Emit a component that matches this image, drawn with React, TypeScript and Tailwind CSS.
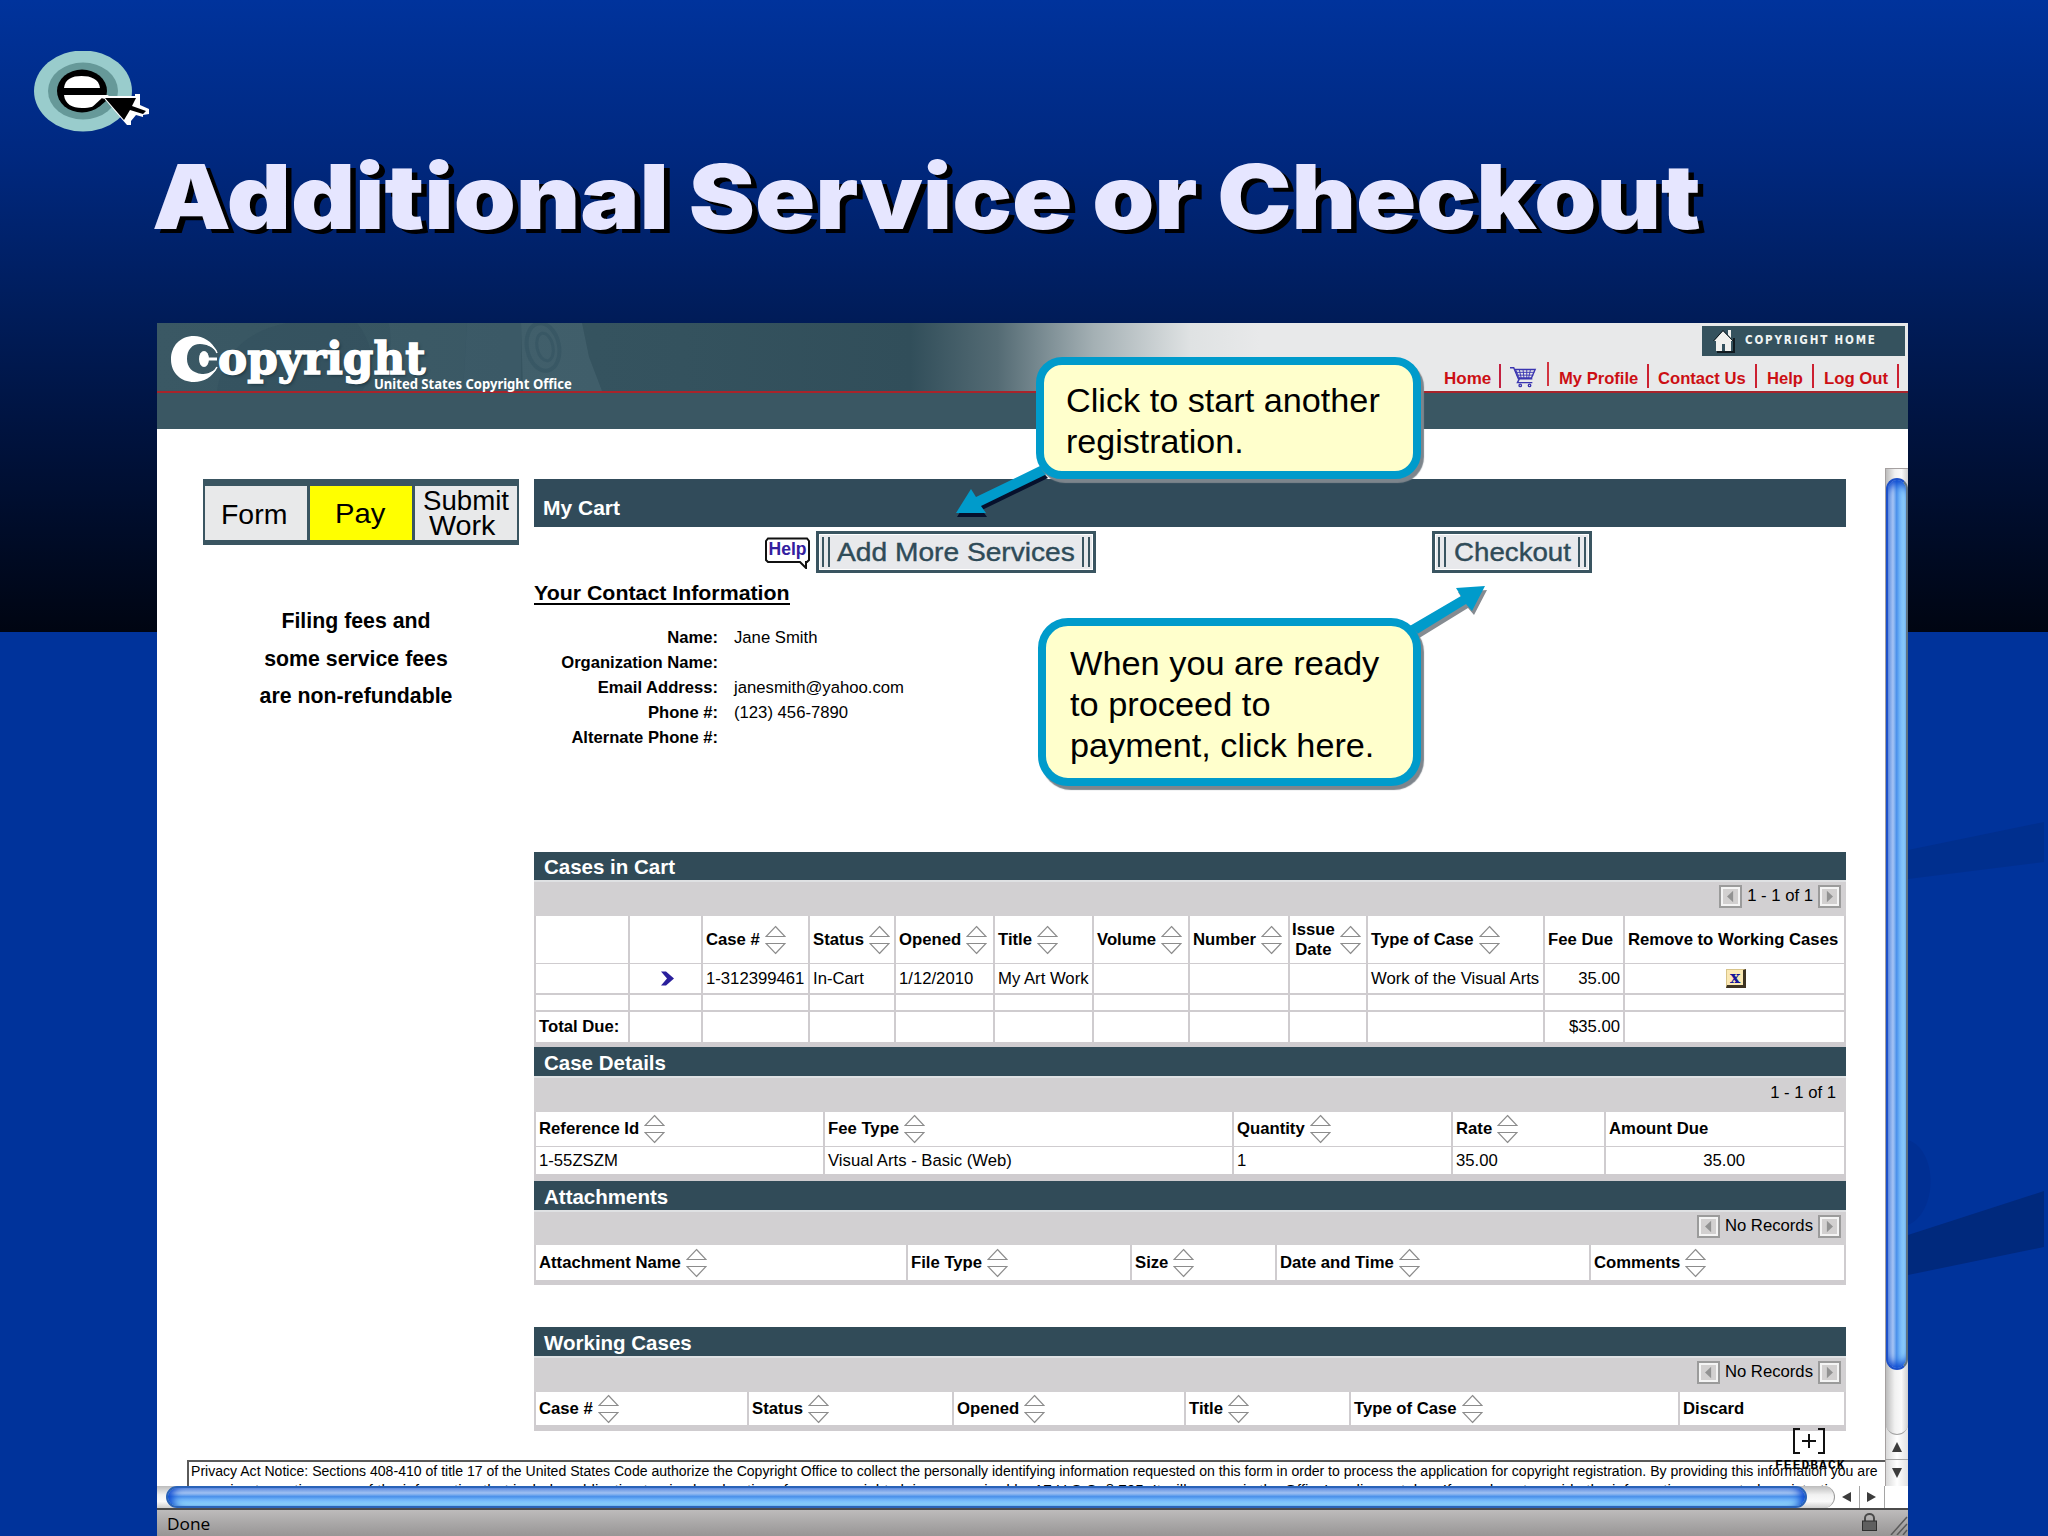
import React, { useLayoutEffect, useRef, useState } from 'react';

/* Text run stretched horizontally to an exact width. */
function Fit({ w, className = '', children }: { w: number; className?: string; children: React.ReactNode }) {
  const ref = useRef<HTMLSpanElement>(null);
  const [scale, setScale] = useState(1);
  useLayoutEffect(() => {
    const measure = () => {
      if (ref.current && ref.current.offsetWidth) setScale(w / ref.current.offsetWidth);
    };
    measure();
    document.fonts?.ready.then(measure);
  }, [w]);
  return (
    <span className={'block shrink-0 ' + className} style={{ width: w }}>
      <span ref={ref} className="inline-block origin-left whitespace-nowrap" style={{ transform: `scaleX(${scale})` }}>
        {children}
      </span>
    </span>
  );
}

function Sort() {
  return (
    <svg className="ml-[5px] h-[30px] w-[21px] shrink-0" viewBox="0 0 21 30" fill="#fff" stroke="#8c8c8c" strokeWidth="1.2">
      <path d="M10.5 1.5 L20 11.5 H1 Z" />
      <path d="M10.5 28.5 L20 18.5 H1 Z" />
    </svg>
  );
}

function PagerButton({ dir }: { dir: 'left' | 'right' }) {
  return (
    <span className="flex h-[23px] w-[23px] shrink-0 items-center justify-center border-2 border-[#9b9b9b] bg-[#d2d0d0] shadow-[inset_0_0_0_2px_#f4f4f4]">
      <svg className="h-[13px] w-[7px]" viewBox="0 0 8 13" fill="#929292">
        {dir === 'left' ? <path d="M7 0 V13 L0 6.5 Z" /> : <path d="M1 0 V13 L8 6.5 Z" />}
      </svg>
    </span>
  );
}

function SectionBar({ title, className }: { title: string; className: string }) {
  return (
    <div className={'flex items-center bg-[#314b58] pl-[10px] pt-[3px] text-[20.5px] font-bold leading-none text-white ' + className}>
      {title}
    </div>
  );
}

function Pager({ label, buttons = true, className }: { label: string; buttons?: boolean; className: string }) {
  return (
    <div className={'flex items-start justify-end border-t-2 border-[#dfe1e3] bg-[#d2d0d2] pt-[3px] text-[16.700px] leading-[22px] ' + className}>
      {buttons && <PagerButton dir="left" />}
      <span className={buttons ? 'mx-[5px]' : 'mr-[10px] mt-[1px]'}>{label}</span>
      {buttons && <PagerButton dir="right" />}
      {buttons && <span className="w-[5px]" />}
    </div>
  );
}

function Head({ label, sort = true }: { label: string; sort?: boolean }) {
  return (
    <div className="flex items-center whitespace-nowrap bg-white pl-[3px] font-bold">
      {label}
      {sort && <Sort />}
    </div>
  );
}

function Cell({ children, className = '' }: { children?: React.ReactNode; className?: string }) {
  return <div className={'flex items-center whitespace-nowrap bg-white pl-[3px] ' + className}>{children}</div>;
}

const casesGrid = 'grid grid-cols-[92px_71px_105px_84px_97px_97px_94px_98px_76px_175px_78px_219px] gap-x-[2px] bg-[#cfcccf] px-[2px]';
const detailsGrid = 'grid grid-cols-[287px_407px_217px_151px_238px] gap-x-[2px] bg-[#cfcccf] px-[2px]';
const attachGrid = 'grid grid-cols-[370px_222px_143px_312px_253px] gap-x-[2px] bg-[#cfcccf] px-[2px]';
const workingGrid = 'grid grid-cols-[211px_203px_230px_163px_327px_164px] gap-x-[2px] bg-[#cfcccf] px-[2px]';

function Logo() {
  return (
    <svg className="h-[86px] w-[120px]" viewBox="0 0 120 86">
      <ellipse cx="49" cy="40" rx="49" ry="40.5" fill="#99cccc" />
      <ellipse cx="49" cy="40" rx="35" ry="28.5" fill="#669999" />
      <ellipse cx="48" cy="40" rx="25" ry="21.5" fill="#000" />
      <path d="M30 37 C31 28 38 25 47.5 25 C57 25 65 28 66 37 Z" fill="#fff" />
      <path d="M30 44 H75 L66 50 C62 56 56 57 48 57 C38 57 31 53 30 44 Z" fill="#fff" />
      <path d="M68 45 L101 45 V43 H106 V54 L115 58 V63 L109 64 V66 L102 64 L97 70 V74 H93 L86 66 Z" fill="#fff" />
      <path d="M71 47 L102 47 L98 55 L112 60 L109 63 L96 59 L90 69 Z" fill="#000" />
      <path d="M55 59 L66 55 L72 50 L68 47 Z" fill="#000" />
    </svg>
  );
}

function SiteHeader() {
  return (
    <header className="flex h-[106px] flex-col bg-[#3a5763]">
      <div className="relative flex h-[70px] justify-between border-b-2 border-[#a8242b] bg-[linear-gradient(90deg,#3a5864_0%,#34525e_30%,#314e5a_43%,#546b74_48%,#a4b0b4_53.5%,#dfe2e3_59%,#e8e9ea_63%)]">
        <svg className="absolute left-0 top-0 h-[68px] w-[480px]" viewBox="0 0 480 68" fill="none">
          <path d="M60 68 C66 30 90 8 130 0 H200 C215 20 222 44 205 68 Z" fill="#2c4956" opacity=".25" />
          <path d="M232 0 H310 L306 68 H222 C232 40 236 20 232 0 Z" fill="#456470" opacity=".3" />
          <path d="M310 0 H364 V68 H306 Z" fill="#3f5e6a" opacity=".6" />
          <path d="M364 0 H425 L432 34 L445 68 H366 Z" fill="#4b6a76" opacity=".5" />
          <ellipse cx="386" cy="24" rx="16" ry="24" stroke="#345460" strokeWidth="4" opacity=".6" transform="rotate(-12 386 24)" />
          <ellipse cx="388" cy="24" rx="8" ry="14" stroke="#345460" strokeWidth="3" opacity=".6" transform="rotate(-12 388 24)" />
        </svg>
        <div className="relative pl-[14px] pt-[12px] text-white">
          <div className="flex h-[50px] items-start">
            <svg className="mt-[1px] h-[47px] w-[47px] shrink-0" viewBox="0 0 47 47">
              <path d="M46 16 C41 5 32 0 23 0 C9 0 0 10 0 23.500 C0 37 10 46 23 46 C33 46 41 41 46 32 C40 37 35 38 31 38 C21 37 16 31 16 23 C16 14 21 8 29 8 C36 8 42 11 46 16 Z" fill="#fff" />
              <path d="M46 17 C44 11 37 7 30 7 M46 31 C43 37 37 40 30 39" stroke="#fff" strokeWidth="1.500" fill="none" />
              <ellipse cx="33" cy="23" rx="5" ry="8" fill="#fff" />
              <path d="M30 23 H46" stroke="#fff" strokeWidth="3" />
            </svg>
            <Fit w={207} className="-mt-[5px] text-[45px] font-bold leading-[58px] [-webkit-text-stroke:1.5px_#fff] [font-family:'DejaVu_Serif',serif] [text-shadow:2px_2px_3px_#1f3a46]">
              opyright
            </Fit>
          </div>
          <div className="relative -top-[12px] left-[203px]">
            <Fit w={198} className="text-[14.500px] font-bold leading-[20px] [font-family:'Noto_Sans',sans-serif]">
              United States Copyright Office
            </Fit>
          </div>
        </div>
        <div className="flex flex-col items-end pr-[3px] pt-[3px]">
          <div className="flex h-[30px] w-[203px] items-center bg-[#35525e] pl-[11px]">
            <svg className="h-[24px] w-[22px]" viewBox="0 0 22 24">
              <path d="M4 23 H21 V9" stroke="#101a20" strokeWidth="2" fill="none" />
              <path d="M1 12 L10 2 L20 12 H18 V22 H12 V15 H9 V22 H3 V12 Z" fill="#f1f1ee" />
              <path d="M15 1 H18 V9 L15 6 Z" fill="#f1f1ee" />
              <path d="M0.500 12 L10 1.500 L20 12" stroke="#10191e" strokeWidth="1" fill="none" />
            </svg>
            <Fit w={132} className="ml-[10px] text-[11.500px] font-bold leading-none tracking-[2px] text-[#f0f4f4] [font-family:'DejaVu_Sans',sans-serif]">
              COPYRIGHT HOME
            </Fit>
          </div>
          <nav className="mt-[7px] flex h-[26px] items-center text-[17px] font-bold text-[#cc0f14]">
            <Fit w={47} className="pt-[5px]">Home</Fit>
            <span className="ml-[8px] h-[24px] w-[2px] bg-[#c4203f]" />
            <svg className="ml-[9px] mt-[2px] h-[22px] w-[27px]" viewBox="0 0 29 22" fill="none" stroke="#3a35b0" strokeWidth="1.500">
              <path d="M0 1 H4 L9 13 H24 M5 3 H27 L23 12 H9" />
              <path d="M6 3 L10 12 M10 3 L12 12 M14 3 L15 12 M18 3 V12 M22 3 L20 12 M6 6 H26 M7 9 H25" strokeWidth="1" />
              <path d="M10 13 L8 17 H24" />
              <circle cx="11" cy="20" r="1.300" />
              <circle cx="21" cy="20" r="1.300" />
            </svg>
            <span className="mb-[4px] ml-[10px] h-[24px] w-[2px] bg-[#d23440]" />
            <Fit w={79} className="ml-[10px] pt-[5px]">My Profile</Fit>
            <span className="ml-[9px] h-[24px] w-[2px] bg-[#cc2030]" />
            <Fit w={88} className="ml-[9px] pt-[5px]">Contact Us</Fit>
            <span className="ml-[9px] h-[24px] w-[2px] bg-[#cc2030]" />
            <Fit w={36} className="ml-[10px] pt-[5px]">Help</Fit>
            <span className="ml-[9px] h-[24px] w-[2px] bg-[#cc2030]" />
            <Fit w={64} className="ml-[10px] pt-[5px]">Log Out</Fit>
            <span className="ml-[9px] mr-[6px] h-[24px] w-[2px] bg-[#cc2030]" />
          </nav>
        </div>
      </div>
    </header>
  );
}

function BarButton({ label, w, className }: { label: string; w: number; className: string }) {
  return (
    <div className={'flex h-[42px] items-center justify-between border-[3px] border-[#3a5561] bg-[#e8e9ec] px-[3px] text-[26.500px] leading-none text-[#2f4b58] shadow-[inset_0_0_0_1px_#fff] ' + className}>
      <span className="h-[30px] w-[8px] border-x-[2px] border-[#3a5561]" />
      <Fit w={w} className="[-webkit-text-stroke:0.4px_#2f4b58]">{label}</Fit>
      <span className="h-[30px] w-[8px] border-x-[2px] border-[#3a5561]" />
    </div>
  );
}

function Sidebar() {
  return (
    <aside className="w-[377px] shrink-0 pl-[46px]">
      <div className="flex h-[66px] w-[316px] gap-[3px] bg-[#3a5561] px-[2px] pb-[5px] pt-[7px] text-[28px] leading-none text-black">
        <div className="flex w-[102px] items-center justify-center bg-[#e8e9ea] pr-[4px] pt-[4px]">
          <Fit w={66}>Form</Fit>
        </div>
        <div className="flex w-[102px] items-center justify-center bg-[#ffff00] pr-[3px] pt-[1px]">
          <Fit w={50}>Pay</Fit>
        </div>
        <div className="flex w-[102px] flex-col items-center bg-[#e8e9ea] pt-[3px] text-[27px] leading-[25px]">
          <Fit w={86}>Submit</Fit>
          <Fit w={67} className="mr-[7px]">Work</Fit>
        </div>
      </div>
      <div className="mt-[58px] w-[306px] text-center text-[21.300px] font-bold leading-[37.500px]">
        Filing fees and
        <br />
        some service fees
        <br />
        are non-refundable
      </div>
    </aside>
  );
}

const contact = [
  ['Name:', 'Jane Smith'],
  ['Organization Name:', ''],
  ['Email Address:', 'janesmith@yahoo.com'],
  ['Phone #:', '(123) 456-7890'],
  ['Alternate Phone #:', ''],
];

function CartPanel() {
  return (
    <main className="w-[1312px] shrink-0">
      <div className="flex h-[48px] items-center bg-[#314b5a] pl-[9px] pt-[8px] text-[21px] font-bold leading-none text-white">My Cart</div>
      <div className="mt-[4px] flex h-[42px] items-start pl-[231px]">
        <svg className="mt-[6px] h-[32px] w-[46px]" viewBox="0 0 46 32">
          <path d="M3 1.500 H42 L44 4 V23 L42 25 H41 L41 31 L35 25 H3 L1 23 V4 Z" fill="#fff" stroke="#111" strokeWidth="2" />
          <text x="3.500" y="17.500" fontSize="18" fontWeight="700" fontFamily="Liberation Sans, Arial, sans-serif" fill="#33209f" textLength="38" lengthAdjust="spacingAndGlyphs">Help</text>
        </svg>
        <BarButton label="Add More Services" w={238} className="ml-[5px] w-[280px]" />
        <BarButton label="Checkout" w={117} className="ml-[336px] w-[160px]" />
      </div>
      <div className="mt-[7px] flex h-[26px]">
        <span className="h-[25px] border-b-2 border-black text-[21px] font-bold leading-[26px]"><Fit w={256}>Your Contact Information</Fit></span>
      </div>
      <dl className="mt-[19px] h-[227px] text-[16.700px] leading-[25.100px]">
        {contact.map(([k, v]) => (
          <div key={k} className="flex h-[25.100px]">
            <dt className="w-[184px] text-right text-[16.600px] font-bold">{k}</dt>
            <dd className="ml-[16px]">{v}</dd>
          </div>
        ))}
      </dl>

      <SectionBar title="Cases in Cart" className="h-[28px]" />
      <Pager label="1 - 1 of 1" className="h-[36px]" />
      <div className={casesGrid + ' h-[47px] text-[16.700px]'}>
        <Cell />
        <Cell />
        <Head label="Case #" />
        <Head label="Status" />
        <Head label="Opened" />
        <Head label="Title" />
        <Head label="Volume" />
        <Head label="Number" />
        <div className="flex items-center bg-white pl-[2px] font-bold">
          <span className="text-center leading-[20px]">
            Issue
            <br />
            Date
          </span>
          <Sort />
        </div>
        <Head label="Type of Case" />
        <Head label="Fee Due" sort={false} />
        <Head label="Remove to Working Cases" sort={false} />
      </div>
      <div className={casesGrid + ' h-[32px] pb-[2px] pt-px text-[16.700px]'}>
        <Cell />
        <Cell className="justify-center">
          <svg className="h-[15px] w-[15px]" viewBox="0 0 15 15">
            <path d="M1 0.500 H6 L14 7.500 L6 14.500 H1 L7 7.500 Z" fill="#2a1f9c" />
          </svg>
        </Cell>
        <Cell>1-312399461</Cell>
        <Cell>In-Cart</Cell>
        <Cell>1/12/2010</Cell>
        <Cell>My Art Work</Cell>
        <Cell />
        <Cell />
        <Cell />
        <Cell>Work of the Visual Arts</Cell>
        <Cell className="justify-end pr-[3px]">35.00</Cell>
        <Cell className="justify-center">
          <span className="flex h-[19px] w-[20px] items-center justify-center border border-b-[3px] border-r-[3px] border-[#d8c48a] border-b-[#3d3322] border-r-[#3d3322] bg-[#fbe9b4] text-[17px] font-bold leading-none text-[#14149a] [font-family:'DejaVu_Serif',serif]">
            x
          </span>
        </Cell>
      </div>
      <div className={casesGrid + ' h-[17px] pb-[2px]'}>
        {Array.from({ length: 12 }, (_, i) => (
          <Cell key={i} />
        ))}
      </div>
      <div className={casesGrid + ' h-[35px] pb-[5px] text-[16.700px]'}>
        <Cell className="font-bold">Total Due:</Cell>
        {Array.from({ length: 9 }, (_, i) => (
          <Cell key={i} />
        ))}
        <Cell className="justify-end pr-[3px]">$35.00</Cell>
        <Cell />
      </div>

      <SectionBar title="Case Details" className="h-[29px]" />
      <Pager label="1 - 1 of 1" buttons={false} className="h-[36px]" />
      <div className={detailsGrid + ' h-[35px] pb-px text-[16.700px]'}>
        <Head label="Reference Id" />
        <Head label="Fee Type" />
        <Head label="Quantity" />
        <Head label="Rate" />
        <Head label="Amount Due" sort={false} />
      </div>
      <div className={detailsGrid + ' h-[34px] pb-[7px] text-[16.700px]'}>
        <Cell>1-55ZSZM</Cell>
        <Cell>Visual Arts - Basic (Web)</Cell>
        <Cell>1</Cell>
        <Cell>35.00</Cell>
        <Cell className="justify-end pr-[99px]">35.00</Cell>
      </div>

      <SectionBar title="Attachments" className="h-[29px]" />
      <Pager label="No Records" className="h-[35px]" />
      <div className={attachGrid + ' h-[40px] pb-[5px] text-[16.700px]'}>
        <Head label="Attachment Name" />
        <Head label="File Type" />
        <Head label="Size" />
        <Head label="Date and Time" />
        <Head label="Comments" />
      </div>

      <SectionBar title="Working Cases" className="mt-[42px] h-[29px]" />
      <Pager label="No Records" className="h-[36px]" />
      <div className={workingGrid + ' h-[39px] pb-[6px] text-[16.700px]'}>
        <Head label="Case #" />
        <Head label="Status" />
        <Head label="Opened" />
        <Head label="Title" />
        <Head label="Type of Case" />
        <Head label="Discard" sort={false} />
      </div>
    </main>
  );
}

function Arrow({ d }: { d: string }) {
  return (
    <svg className="h-[10px] w-[10px]" viewBox="0 0 10 10" fill="#3c3c3c">
      <path d={d} />
    </svg>
  );
}

function VerticalScrollbar() {
  return (
    <div className="mt-[39px] flex w-[23px] shrink-0 flex-col border-l border-t border-[#a5a0a0] bg-[linear-gradient(90deg,#d9d9d9,#ffffff_50%,#e2e2e2)]">
      <div className="h-[966px] rounded-b-[11px] border-b border-[#a2a2a2] bg-[linear-gradient(90deg,#bcbcbc,#f1f1f1_40%,#fafafa_70%,#cfcfcf)] pt-[9px]">
        <div className="h-[892px] w-[22px] rounded-[11px] border-2 border-[#1d50c8] border-r-[#5f7383] bg-[linear-gradient(90deg,#7fa6e6_0%,#a9c8f4_28%,#4a90ea_48%,#6fb4f8_65%,#9fe0ff_90%)] shadow-[inset_0_8px_8px_-4px_#0a46cf,inset_0_-8px_8px_-4px_#0a46cf]" />
      </div>
      <div className="flex h-[25px] items-center justify-center border-b border-[#a5a5a5]">
        <Arrow d="M5 0 L10 10 H0 Z" />
      </div>
      <div className="flex h-[26px] items-center justify-center">
        <Arrow d="M5 10 L10 0 H0 Z" />
      </div>
    </div>
  );
}

function HorizontalScrollbar() {
  return (
    <div className="flex h-[24px] shrink-0 border-b-2 border-[#4b4b4b] bg-white">
      <div className="w-[1678px] rounded-r-[11px] border-r border-[#999] bg-[linear-gradient(180deg,#bcbcbc,#f1f1f1_40%,#fafafa_70%,#cfcfcf)] pl-[9px]">
        <div className="h-[22px] w-[1641px] rounded-[11px] border-2 border-[#2a63b8] bg-[linear-gradient(180deg,#7fa6e6_0%,#a3c4f2_28%,#4a90ea_48%,#6fb4f8_65%,#9fe6ff_92%)] shadow-[inset_8px_0_8px_-4px_#0a46cf,inset_-8px_0_8px_-4px_#0a46cf]" />
      </div>
      <div className="flex w-[25px] items-center justify-center border-r border-[#a5a5a5]">
        <Arrow d="M0 5 L9 0 V10 Z" />
      </div>
      <div className="flex w-[25px] items-center justify-center border-r border-[#a5a5a5]">
        <Arrow d="M9 5 L0 0 V10 Z" />
      </div>
    </div>
  );
}

function StatusBar() {
  return (
    <footer className="flex h-[26px] items-center justify-between bg-[linear-gradient(180deg,#bdbbbb,#979595)] pl-[10px] text-black">
      <Fit w={43} className="pt-[3px] text-[16.500px] leading-none [font-family:'Open_Sans',sans-serif]">Done</Fit>
      <div className="flex items-end gap-[12px]">
        <svg className="mb-[3px] h-[20px] w-[17px]" viewBox="0 0 17 20">
          <path d="M4 10 V6 C4 0.500 13 0.500 13 6 V10" fill="none" stroke="#4a4a4a" strokeWidth="2" />
          <rect x="1.500" y="9" width="14" height="9.500" fill="#5f5f5f" stroke="#2f2f2f" />
        </svg>
        <svg className="h-[20px] w-[18px]" viewBox="0 0 18 20" stroke="#5a5a5a" strokeWidth="1.500">
          <path d="M1 20 L17 2 M7 20 L17 9 M13 20 L17 15" />
        </svg>
      </div>
    </footer>
  );
}

function Window() {
  return (
    <div className="relative ml-[157px] flex h-[1213px] w-[1751px] flex-col bg-white text-black">
      <SiteHeader />
      <div className="flex h-[1057px]">
        <div className="relative flex w-[1728px] flex-col overflow-hidden">
          <div className="flex pt-[50px]">
            <Sidebar />
            <CartPanel />
          </div>
          <div className="ml-[30px] mt-[29px] h-[26px] overflow-hidden border-l-2 border-t-2 border-[#5a5a5a] pl-[2px] text-[15.300px] leading-[18.500px]">
            <Fit w={1687}>
              Privacy Act Notice: Sections 408-410 of title 17 of the United States Code authorize the Copyright Office to collect the personally identifying information requested on this form in order to process the application for copyright registration. By providing this information you are
            </Fit>
            <Fit w={1687}>
              agreeing to routine uses of the information that include publication to give legal notice of your copyright claim as required by 17 U.S.C. § 705. It will appear in the Office's online catalog. If you do not provide the information requested, registration may
            </Fit>
          </div>
          <div className="absolute left-[1618px] top-[998px] flex w-[71px] flex-col items-center">
            <svg className="ml-[-3px] h-[28px] w-[32px]" viewBox="0 0 32 28" fill="none" stroke="#111" strokeWidth="2">
              <path d="M7 2 H1 V26 H7 M25 2 H31 V26 H25 M9 14 H23 M16 7 V21" />
            </svg>
            <Fit w={71} className="mt-[3px] text-[12px] font-bold leading-[16px] tracking-[1px] [font-family:'Liberation_Mono',monospace]">FEEDBACK</Fit>
          </div>
        </div>
        <VerticalScrollbar />
      </div>
      <HorizontalScrollbar />
      <StatusBar />
    </div>
  );
}

function Callout({ children, className }: { children: React.ReactNode; className: string }) {
  return (
    <div className={'absolute border-[8px] border-[#009bcb] bg-[#ffffcc] text-[34px] leading-[41px] text-black shadow-[3px_4px_1px_#7d858c] ' + className}>
      {children}
    </div>
  );
}

export default function App() {
  return (
    <div className="relative h-[1536px] w-[2048px] overflow-hidden bg-[#00339b] [font-family:'Liberation_Sans',Arial,sans-serif]">
      <div className="absolute inset-x-0 top-0 h-[632px] bg-[linear-gradient(180deg,#00339c_0%,#00287f_25%,#001d5c_48%,#00133f_68%,#000512_100%)]" />
      <svg className="absolute left-[1900px] top-[800px] h-[500px] w-[148px]" viewBox="0 0 148 500">
        <path d="M8 50 L144 22 V62 L8 79 Z" fill="#002f8e" />
        <path d="M8 435 L144 391 V447 L8 475 Z" fill="#00297d" />
        <path d="M8 340 C38 350 38 412 8 425 Z" fill="#002f93" />
      </svg>

      <div className="relative flex h-[323px] flex-col">
        <div className="h-[139px] pl-[34px] pt-[51px]">
          <Logo />
        </div>
        <h1 className="pl-[152px] text-[89px] font-black leading-[115px] text-[#e6e6ff] [font-family:Inter,'Liberation_Sans',sans-serif] [text-shadow:5px_4px_0_#000]">
          <Fit w={1549}>Additional Service or Checkout</Fit>
        </h1>
      </div>

      <Window />

      <svg className="absolute left-[940px] top-[460px] h-[190px] w-[560px]" viewBox="0 0 560 190">
        <g fill="#06102c" transform="translate(1 4)">
          <path d="M16 53 L31 29 L36 37 L100 6 L107 14 L41 46 L46 53 Z" />
        </g>
        <path d="M16 53 L31 29 L36 37 L100 6 L107 14 L41 46 L46 53 Z" fill="#009bcb" />
        <g fill="#858b91" transform="translate(2 4)">
          <path d="M545 126 L516 128 L521 136 L468 167 L474 176 L526 144 L532 151 Z" />
        </g>
        <path d="M545 126 L516 128 L521 136 L468 167 L474 176 L526 144 L532 151 Z" fill="#009bcb" />
      </svg>
      <Callout className="left-[1036px] top-[357px] h-[122px] w-[385px] rounded-[26px] pl-[22px] pt-[15px]">
        <Fit w={314}>Click to start another</Fit>
        <Fit w={178}>registration.</Fit>
      </Callout>
      <Callout className="left-[1038px] top-[618px] h-[168px] w-[383px] rounded-[30px] pl-[24px] pt-[17px]">
        <Fit w={309}>When you are ready</Fit>
        <Fit w={200}>to proceed to</Fit>
        <Fit w={304}>payment, click here.</Fit>
      </Callout>
    </div>
  );
}
